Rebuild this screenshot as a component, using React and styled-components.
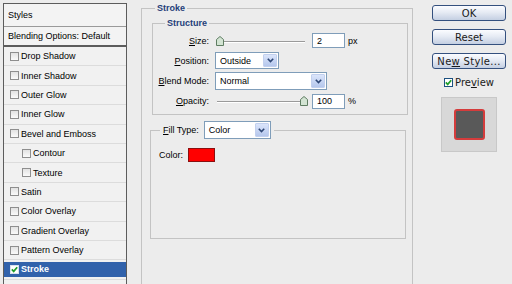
import React from 'react';
import styled, { createGlobalStyle } from 'styled-components';

const Global = createGlobalStyle`
  html, body { margin: 0; padding: 0; background: #ececec; }
  body { font-family: "Liberation Sans", Arial, sans-serif; font-size: 9px; color: #000; }
  * { box-sizing: border-box; }
`;

const Dialog = styled.div`
  display: flex;
  width: 512px;
  height: 284px;
  overflow: hidden;
  background: #ececec;
`;

/* ---------- left styles list ---------- */
const StylesPanel = styled.div`
  flex: none;
  margin: 3px 0 0 3px;
  width: 124px;
  height: 300px;
  border: 1px solid #5c5c5c;
  background: #f1f1f1;
  display: flex;
  flex-direction: column;
`;

const PanelHead = styled.div`
  display: flex;
  align-items: center;
  height: ${p => p.$h}px;
  padding-left: 4px;
  border-bottom: ${p => p.$bw}px solid ${p => p.$bc};
  background: #f3f3f3;
`;

const EffectRow = styled.div`
  display: flex;
  align-items: center;
  height: 19.4px;
  flex: none;
  padding-left: ${p => (p.$indent ? 18 : 6)}px;
  border-bottom: 1px solid #dcdcdc;
  background: ${p => (p.$selected ? '#3162ab' : '#f1f1f1')};
  color: ${p => (p.$selected ? '#fff' : '#000')};
  font-weight: ${p => (p.$selected ? 'bold' : 'normal')};
  box-shadow: ${p => (p.$selected ? 'inset 0 2px #f1f1f1, inset 0 -2px #f1f1f1' : 'none')};
`;

const Box = styled.span`
  flex: none;
  width: 9px;
  height: 9px;
  margin-right: 2px;
  border: 1px solid ${p => (p.$checked ? '#d8e0ee' : '#8e8e8e')};
  background: ${p => (p.$checked ? '#fff' : 'linear-gradient(#e2e2e2, #fafafa)')};
  display: flex;
  align-items: center;
  justify-content: center;
`;

const CheckMark = () => (
  <svg width="7" height="7" viewBox="0 0 7 7">
    <polyline points="0.8,3.4 2.7,5.4 6.2,1.2" fill="none" stroke="#1f9e2a" strokeWidth="1.7" />
  </svg>
);

/* ---------- centre options ---------- */
const Main = styled.div`
  flex: none;
  padding: 3px 0 0 14px;
`;

const Group = styled.fieldset`
  margin: 0;
  width: 272px;
  height: 300px;
  padding: 4px 6px 0 8px;
  border: 1px solid #c3c3c3;
  min-width: 0;
`;

const SubGroup = styled.fieldset`
  margin: ${p => p.$mt}px 0 0 0;
  width: 256px;
  height: ${p => p.$h}px;
  padding: ${p => p.$pad};
  border: 1px solid #c3c3c3;
  min-width: 0;
`;

const Legend = styled.legend`
  margin-left: ${p => p.$ml}px;
  padding: 0 2px;
  font-weight: bold;
  color: #1f3f7a;
  line-height: 11px;
`;

const FillLegend = styled.legend`
  margin-left: 1px;
  padding: 0 3px;
  display: flex;
  align-items: center;
  gap: 5px;
`;

const Form = styled.div`
  display: grid;
  grid-template-columns: 56px auto;
  grid-template-rows: 17px 17px 18px 16px;
  row-gap: 3px;
  column-gap: 6px;
  align-items: center;
`;

const Label = styled.span`
  justify-self: end;
  white-space: nowrap;
`;

const Controls = styled.div`
  display: flex;
  align-items: center;
  height: 100%;
`;

const SliderWrap = styled.div`
  position: relative;
  width: 92px;
  height: 12px;
  &::before {
    content: '';
    position: absolute;
    left: 2px;
    right: 2px;
    top: 6px;
    border-top: 1px solid #9a9a9a;
    border-bottom: 1px solid #fff;
  }
`;

const Thumb = styled.svg`
  position: absolute;
  top: 1px;
`;

const Slider = ({ value, max }) => (
  <SliderWrap>
    <Thumb width="8" height="10" viewBox="0 0 8 10" style={{ left: (value / max) * 85 }}>
      <path d="M0.5 3.5 L4 0.5 L7.5 3.5 L7.5 9.5 L0.5 9.5 Z" fill="#d3e4d3" stroke="#5f7d62" />
    </Thumb>
  </SliderWrap>
);

const NumInput = styled.div`
  width: 33px;
  height: 15px;
  margin-left: 5px;
  border: 1px solid #7f9db9;
  background: #fff;
  padding-left: 4px;
  display: flex;
  align-items: center;
`;

const Unit = styled.span`
  margin-left: 3px;
`;

const SelectBox = styled.div`
  width: ${p => p.$w}px;
  height: ${p => p.$h}px;
  border: 1px solid #7f9db9;
  background: #fff;
  display: flex;
  align-items: stretch;
`;

const SelectText = styled.span`
  flex: 1;
  display: flex;
  align-items: center;
  padding-left: 4px;
`;

const DropBtn = styled.span`
  width: 14px;
  margin: 1px;
  border: 1px solid #c2d0ee;
  border-radius: 1px;
  background: linear-gradient(#dbe5fb, #b5c7ec);
  display: flex;
  align-items: center;
  justify-content: center;
`;

const Select = ({ w, h, children }) => (
  <SelectBox $w={w} $h={h}>
    <SelectText>{children}</SelectText>
    <DropBtn>
      <svg width="7" height="5" viewBox="0 0 7 5">
        <polyline points="0.8,0.8 3.5,3.6 6.2,0.8" fill="none" stroke="#2e4775" strokeWidth="1.6" />
      </svg>
    </DropBtn>
  </SelectBox>
);

const ColorRow = styled.div`
  display: flex;
  align-items: center;
  gap: 5px;
`;

const Swatch = styled.div`
  width: 27px;
  height: 14px;
  background: #ff0000;
  border: 1px solid #8a1010;
`;

/* ---------- right buttons ---------- */
const Side = styled.div`
  flex: none;
  width: 74px;
  margin-left: 19px;
  padding-top: 5px;
  display: flex;
  flex-direction: column;
  align-items: center;
  gap: 8px;
  font-family: "DejaVu Sans", sans-serif;
  font-size: 10px;
  color: #1a1a1a;
`;

const Button = styled.div`
  width: 74px;
  height: 16px;
  border: 1px solid #34507e;
  border-radius: 3px;
  background: linear-gradient(#fbfcff, #e6ebf4 45%, #c4cfe2);
  display: flex;
  align-items: center;
  justify-content: center;
  white-space: pre;
  letter-spacing: ${p => p.$ls || 0}px;
`;

const PreviewRow = styled.div`
  display: flex;
  align-items: center;
  height: 10px;
  gap: 2px;
`;

const PreviewCheck = styled.span`
  width: 9px;
  height: 9px;
  border: 1px solid #1c5180;
  background: #fff;
  display: flex;
  align-items: center;
  justify-content: center;
`;

const PreviewBox = styled.div`
  margin-top: 2px;
  width: 56px;
  height: 55px;
  background: #d8d8d8;
  border: 1px solid #c8c8c8;
  display: flex;
  align-items: center;
  justify-content: center;
`;

const PreviewSquare = styled.div`
  width: 31px;
  height: 31px;
  background: #595959;
  border: 2px solid #d43c3c;
  border-radius: 3px;
`;

const effects = [
  { name: 'Drop Shadow' },
  { name: 'Inner Shadow' },
  { name: 'Outer Glow' },
  { name: 'Inner Glow' },
  { name: 'Bevel and Emboss' },
  { name: 'Contour', indent: true },
  { name: 'Texture', indent: true },
  { name: 'Satin' },
  { name: 'Color Overlay' },
  { name: 'Gradient Overlay' },
  { name: 'Pattern Overlay' },
  { name: 'Stroke', selected: true },
];

export default function App() {
  return (
    <>
      <Global />
      <Dialog>
        <StylesPanel>
          <PanelHead $h={23} $bw={1} $bc="#9a9a9a">Styles</PanelHead>
          <PanelHead $h={20} $bw={2} $bc="#5c5c5c">Blending Options: Default</PanelHead>
          {effects.map(e => (
            <EffectRow key={e.name} $indent={e.indent} $selected={e.selected}>
              <Box $checked={e.selected}>{e.selected && <CheckMark />}</Box>
              {e.name}
            </EffectRow>
          ))}
          <EffectRow />
        </StylesPanel>

        <Main>
          <Group>
            <Legend $ml={5}>Stroke</Legend>
            <SubGroup $h={97} $pad="3px 0 4px 0">
              <Legend $ml={12}>Structure</Legend>
              <Form>
                <Label><u>S</u>ize:</Label>
                <Controls>
                  <Slider value={2} max={250} />
                  <NumInput>2</NumInput>
                  <Unit>px</Unit>
                </Controls>
                <Label><u>P</u>osition:</Label>
                <Controls>
                  <Select w={64} h={17}>Outside</Select>
                </Controls>
                <Label><u>B</u>lend Mode:</Label>
                <Controls>
                  <Select w={112} h={18}>Normal</Select>
                </Controls>
                <Label><u>O</u>pacity:</Label>
                <Controls>
                  <Slider value={100} max={100} />
                  <NumInput>100</NumInput>
                  <Unit>%</Unit>
                </Controls>
              </Form>
            </SubGroup>
            <SubGroup $mt={6} $h={118} $pad="9px 0 0 8px">
              <FillLegend>
                <span><u>F</u>ill Type:</span>
                <Select w={67} h={18}>Color</Select>
              </FillLegend>
              <ColorRow>
                <span>Color:</span>
                <Swatch />
              </ColorRow>
            </SubGroup>
          </Group>
        </Main>

        <Side>
          <Button>OK</Button>
          <Button>Reset</Button>
          <Button $ls={0.3}>Ne<u>w</u> Style...</Button>
          <PreviewRow>
            <PreviewCheck><CheckMark /></PreviewCheck>
            <span>Pre<u>v</u>iew</span>
          </PreviewRow>
          <PreviewBox>
            <PreviewSquare />
          </PreviewBox>
        </Side>
      </Dialog>
    </>
  );
}
